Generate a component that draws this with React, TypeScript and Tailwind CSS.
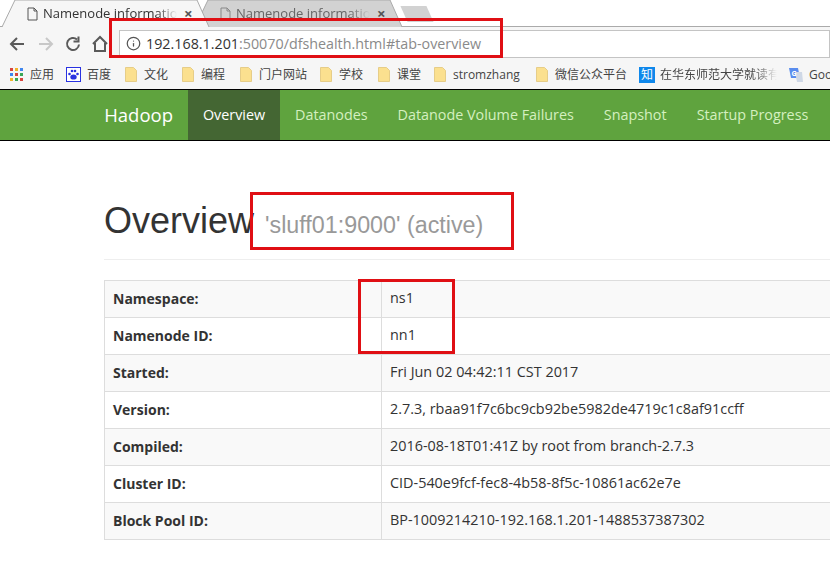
import { Info } from "lucide-react";

const bookmarks = [
  { label: "文化", w: "w-[57px]" },
  { label: "编程", w: "w-[58px]" },
  { label: "门户网站", w: "w-[80px]" },
  { label: "学校", w: "w-[58px]" },
  { label: "课堂", w: "w-[56px]" },
  { label: "stromzhang", w: "w-[102px]" },
  { label: "微信公众平台", w: "w-[103px]" },
];

const rows = [
  ["Namespace:", "ns1"],
  ["Namenode ID:", "nn1"],
  ["Started:", "Fri Jun 02 04:42:11 CST 2017"],
  ["Version:", "2.7.3, rbaa91f7c6bc9cb92be5982de4719c1c8af91ccff"],
  ["Compiled:", "2016-08-18T01:41Z by root from branch-2.7.3"],
  ["Cluster ID:", "CID-540e9fcf-fec8-4b58-8f5c-10861ac62e7e"],
  ["Block Pool ID:", "BP-1009214210-192.168.1.201-1488537387302"],
];

const navItems = ["Datanodes", "Datanode Volume Failures", "Snapshot", "Startup Progress"];

function PageIcon({ color }: { color: string }) {
  return (
    <svg width="11" height="14" viewBox="0 0 11 14" fill="none" stroke={color} strokeWidth="1">
      <path d="M1 1h6l3 3v9H1z" />
      <path d="M7 1v3h3" />
    </svg>
  );
}

function Tab({ active }: { active: boolean }) {
  return (
    <div className={`relative flex h-[27px] w-[193px] items-center pl-[25px] text-[13px] whitespace-nowrap ${active ? "z-10 text-[#333]" : "text-[#666]"}`}>
      <svg className="absolute top-0 left-0" width="210" height="28" viewBox="0 0 210 28">
        <path d="M0 27 L13 0 L195 0 L207 27" fill={active ? "#f6f6f6" : "#d2d2d2"} stroke="#aaa" />
      </svg>
      <span className="relative mr-[5px]">
        <PageIcon color={active ? "#555" : "#888"} />
      </span>
      <span className="relative w-[134px] overflow-hidden [mask-image:linear-gradient(to_right,black_85%,transparent)]">Namenode information</span>
      <span className="relative ml-[7px] text-[15px] font-bold text-[#555]">×</span>
    </div>
  );
}

function Folder() {
  return (
    <svg width="12" height="15" viewBox="0 0 12 15" className="shrink-0">
      <path d="M0.5 0.5h8l3 3v11h-11z" fill="#fbe08f" stroke="#e6cd88" />
    </svg>
  );
}

function RedBox({ className }: { className: string }) {
  return <div className={`absolute border-[3px] border-[#e00f14] ${className}`} />;
}

export default function App() {
  return (
    <div className="relative h-[567px] w-[830px] overflow-hidden bg-white font-['Open_Sans',sans-serif]">
      {/* tab strip */}
      <div className="flex h-[27px] border-b border-[#aaa] bg-white pl-[2px]">
        <Tab active />
        <Tab active={false} />
        <div className="mt-[6px] ml-[16px] h-[16px] w-[26px] skew-x-[24deg] bg-[#d2d2d2]" />
      </div>

      {/* toolbar */}
      <div className="relative z-20 flex h-[33px] items-center bg-[#f6f6f6] pl-[9px]">
        <svg width="100" height="20" viewBox="0 0 100 20" fill="none" strokeWidth="2" className="shrink-0">
          <path d="M15 10H2M8 4l-6 6 6 6" stroke="#5a5a5a" />
          <path d="M43 10h-13M37 4l6 6-6 6" stroke="#c8c8c8" />
          <path d="M68 5.5a6 6 0 1 0 2 5M69.500 2.500v5h-5" stroke="#5a5a5a" />
          <path d="M84 10l7-7 7 7M86 9v8h10V9" stroke="#5a5a5a" />
        </svg>
        <div className="ml-[10px] flex h-[28px] flex-1 items-center border border-[#c4c4c4] bg-white pl-[6px] text-[14.3px] text-[#8a8a8a]">
          <Info size={15} className="mr-[5px] text-[#555]" />
          <span className="text-[#333]">192.168.1.201</span>:50070/dfshealth.html#tab-overview
        </div>
      </div>

      {/* bookmarks */}
      <div className="flex h-[29px] items-center bg-[#f6f6f6] pl-[10px] text-[12px] whitespace-nowrap text-[#444] font-['Open_Sans','Noto_Sans_CJK_SC',sans-serif]">
        <div className="flex w-[56px] shrink-0 items-center gap-[7px]">
          <div className="grid h-[13px] w-[13px] grid-cols-3 gap-[2px]">
            <i className="bg-[#d9453d]" /><i className="bg-[#f0b429]" /><i className="bg-[#3f86ef]" />
            <i className="bg-[#3f86ef]" /><i className="bg-[#d9453d]" /><i className="bg-[#3aa757]" />
            <i className="bg-[#f0b429]" /><i className="bg-[#3aa757]" /><i className="bg-[#d9453d]" />
          </div>
          应用
        </div>
        <div className="flex w-[59px] shrink-0 items-center gap-[6px]">
          <svg width="15" height="15" viewBox="0 0 15 15" className="shrink-0">
            <rect x="0.5" y="0.5" width="14" height="14" fill="#fff" stroke="#2932e1" />
            <ellipse cx="7.5" cy="10" rx="3.2" ry="2.6" fill="#2932e1" />
            <circle cx="3.5" cy="7" r="1.3" fill="#2932e1" />
            <circle cx="6" cy="4" r="1.3" fill="#2932e1" />
            <circle cx="9" cy="4" r="1.3" fill="#2932e1" />
            <circle cx="11.5" cy="7" r="1.3" fill="#2932e1" />
          </svg>
          百度
        </div>
        {bookmarks.map((b) => (
          <div key={b.label} className={`flex shrink-0 items-center gap-[7px] ${b.w}`}>
            <Folder />
            {b.label}
          </div>
        ))}
        <div className="flex w-[149px] shrink-0 items-center gap-[5px]">
          <span className="flex h-[16px] w-[16px] shrink-0 items-center justify-center bg-[#0f88eb] text-[12px] text-white">知</span>
          <span className="w-[117px] overflow-hidden [mask-image:linear-gradient(to_right,black_80%,transparent)]">在华东师范大学就读有</span>
        </div>
        <div className="flex shrink-0 items-center gap-[5px]">
          <svg width="16" height="16" viewBox="0 0 16 16" className="shrink-0">
            <path d="M1 1h9l2 10H3z" fill="#5a8dee" />
            <path d="M7 5h7l1 10H9z" fill="#cfd8e6" />
            <text x="3.500" y="9" fontSize="7" fontWeight="700" fill="#fff">G</text>
          </svg>
          Google
        </div>
      </div>

      {/* navbar */}
      <nav className="flex h-[52px] items-stretch border-y border-black bg-[#5fa33e] text-[14.35px]">
        <div className="flex w-[188px] shrink-0 items-center justify-end pr-[15px] text-[18.500px] text-white">Hadoop</div>
        <div className="flex w-[92px] items-center justify-center bg-[#446633] text-white">Overview</div>
        {navItems.map((item) => (
          <div key={item} className="flex shrink-0 items-center px-[15px] whitespace-nowrap text-[#d5f0c0]">
            {item}
          </div>
        ))}
      </nav>

      {/* content */}
      <div className="pt-[60px] pl-[104px]">
        <div className="flex h-[59px] items-baseline border-b border-[#eee] font-['Liberation_Sans',sans-serif] whitespace-nowrap text-[#333]">
          <h1 className="text-[36px] leading-[40px]">Overview</h1>
          <span className="ml-[11px] text-[23.300px] leading-[40px] text-[#999]">'sluff01:9000' (active)</span>
        </div>
        <table className="mt-[20px] w-[760px] table-fixed border-collapse text-[14.4px] text-[#333]">
          <tbody>
            {rows.map(([label, value], i) => (
              <tr key={label} className={`h-[37px] ${i % 2 === 0 ? "bg-[#f9f9f9]" : ""}`}>
                <th className="w-[277px] border border-[#ddd] pb-[2px] pl-[8px] text-left text-[14px] font-bold">{label}</th>
                <td className="border border-[#ddd] pb-[2px] pl-[8px]">{value}</td>
              </tr>
            ))}
          </tbody>
        </table>
      </div>

      {/* annotations */}
      <RedBox className="top-[18px] left-[109px] z-30 h-[40px] w-[394px]" />
      <RedBox className="top-[192px] left-[250px] h-[58px] w-[264px]" />
      <RedBox className="top-[279px] left-[358px] h-[75px] w-[97px]" />
    </div>
  );
}
